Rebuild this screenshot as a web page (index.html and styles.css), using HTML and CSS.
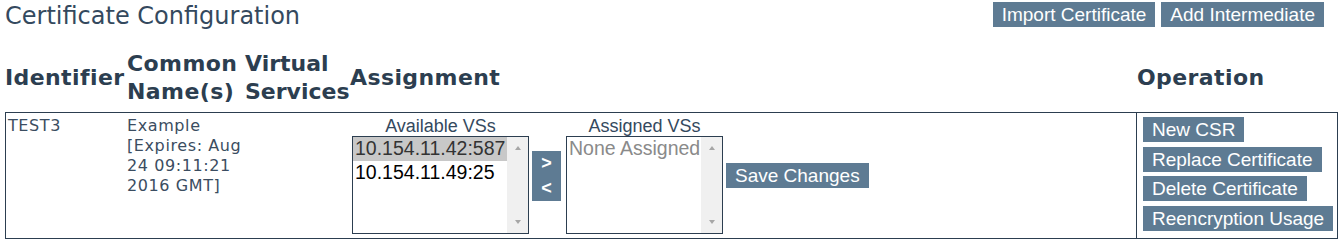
FILE: index.html
```html
<!DOCTYPE html>
<html lang="en">
<head>
<meta charset="utf-8">
<title>Certificate Configuration</title>
<link rel="stylesheet" href="styles.css">
</head>
<body>
<div class="page">
  <div class="topbar">
    <h1 class="title">Certificate Configuration</h1>
    <div class="actions">
      <button class="btn">Import Certificate</button>
      <button class="btn">Add Intermediate</button>
    </div>
  </div>

  <div class="cols head">
    <div class="th">Identifier</div>
    <div class="th">Common Name(s)</div>
    <div class="th th-tight">Virtual Services</div>
    <div class="th">Assignment</div>
    <div class="th">Operation</div>
  </div>

  <div class="cols row">
    <div class="cell c-id">TEST3</div>
    <div class="cell c-cn">Example [Expires: Aug 24 09:11:21 2016 GMT]</div>
    <div class="cell c-vs"></div>
    <div class="cell c-assign">
      <div class="vs-col">
        <div class="vs-label">Available VSs</div>
        <div class="listbox lb-avail">
          <div class="options">
            <div class="opt selected">10.154.11.42:587</div>
            <div class="opt">10.154.11.49:25</div>
          </div>
          <div class="scrollbar"><span class="arr up"></span><span class="arr down"></span></div>
        </div>
      </div>
      <div class="movers">
        <button class="mover">&gt;</button>
        <button class="mover">&lt;</button>
      </div>
      <div class="vs-col">
        <div class="vs-label">Assigned VSs</div>
        <div class="listbox lb-assigned">
          <div class="options">
            <div class="opt placeholder">None Assigned</div>
          </div>
          <div class="scrollbar"><span class="arr up"></span><span class="arr down"></span></div>
        </div>
      </div>
      <button class="btn save">Save Changes</button>
    </div>
    <div class="cell c-op">
      <button class="btn">New CSR</button>
      <button class="btn">Replace Certificate</button>
      <button class="btn">Delete Certificate</button>
      <button class="btn">Reencryption Usage</button>
    </div>
  </div>
</div>
</body>
</html>
```

FILE: styles.css
```css
* { box-sizing: border-box; }

html, body {
  margin: 0;
  padding: 0;
  background: #ffffff;
}

body {
  font-family: "DejaVu Sans", Verdana, sans-serif;
  color: #34495e;
}

.page {
  width: 1342px;
}

.topbar {
  display: flex;
  justify-content: space-between;
  align-items: flex-start;
  padding: 2px 18px 0 5px;
}

.title {
  margin: 0;
  font-family: "DejaVu Sans", Verdana, sans-serif;
  font-weight: normal;
  font-size: 24px;
  line-height: 28px;
  color: #34495e;
}

.actions {
  display: flex;
  gap: 6px;
}

.btn {
  display: inline-block;
  margin: 0;
  border: none;
  background: #5e7b93;
  color: #ffffff;
  font-family: "Liberation Sans", Arial, sans-serif;
  font-size: 19px;
  line-height: 25px;
  height: 25px;
  padding: 0 9px;
  white-space: nowrap;
  letter-spacing: 0;
  cursor: pointer;
}

.cols {
  display: grid;
  margin-left: 5px;
  width: 1333px;
}

.head {
  grid-template-columns: 122px 118px 105px 1fr 201px;
  margin-top: 20px;
  margin-bottom: 6px;
  align-items: center;
}

.th {
  font-weight: bold;
  font-size: 22px;
  line-height: 28px;
  letter-spacing: 0.4px;
  color: #2c3e50;
  white-space: normal;
}

.th-tight {
  letter-spacing: 0;
}

.row {
  grid-template-columns: 121px 118px 105px 1fr 201px;
  border: 1px solid #2c3e50;
}

.cell {
  font-size: 16px;
  line-height: 20px;
  letter-spacing: 0.6px;
  color: #3b4d61;
}

.c-id {
  padding: 3px 0 0 2px;
}

.c-cn {
  padding: 3px 0 0 0;
}

.c-assign {
  display: flex;
  align-items: center;
  padding: 4px 0 4px 2px;
  letter-spacing: 0;
}

.vs-col {
  display: flex;
  flex-direction: column;
  align-items: center;
}

.vs-label {
  font-family: "Liberation Sans", Arial, sans-serif;
  font-size: 18px;
  line-height: 19px;
  color: #34495e;
}

.listbox {
  display: flex;
  height: 98px;
  border: 1px solid #2c3e50;
  background: #ffffff;
}

.lb-avail { width: 177px; }
.lb-assigned { width: 157px; }

.options {
  flex: 1;
  overflow: hidden;
}

.opt {
  font-family: "Liberation Sans", Arial, sans-serif;
  font-size: 19.5px;
  line-height: 23.5px;
  padding-left: 2px;
  color: #000000;
  white-space: nowrap;
}

.opt.selected {
  background: #c8c8c8;
  color: #333333;
}

.opt.placeholder {
  color: #8a8a8a;
}

.scrollbar {
  width: 21px;
  background: #f0f0f0;
  display: flex;
  flex-direction: column;
  justify-content: space-between;
  align-items: center;
  padding: 9px 0 9px;
}

.arr {
  width: 0;
  height: 0;
  border-left: 3.5px solid transparent;
  border-right: 3.5px solid transparent;
}

.arr.up { border-bottom: 4px solid #a6a6a6; }
.arr.down { border-top: 4px solid #a6a6a6; }

.movers {
  display: flex;
  flex-direction: column;
  width: 29px;
  margin: 0 5px 0 3px;
  background: #5e7b93;
}

.mover {
  height: 25px;
  margin: 0;
  padding: 0;
  border: none;
  background: transparent;
  color: #ffffff;
  font-family: "Liberation Sans", Arial, sans-serif;
  font-weight: bold;
  font-size: 18px;
  line-height: 25px;
}

.save {
  margin-left: 3px;
}

.c-op {
  border-left: 1px solid #2c3e50;
  padding: 4px 6px 7px 6px;
  display: flex;
  flex-direction: column;
  align-items: flex-start;
  gap: 4.5px;
  letter-spacing: 0;
}
```
